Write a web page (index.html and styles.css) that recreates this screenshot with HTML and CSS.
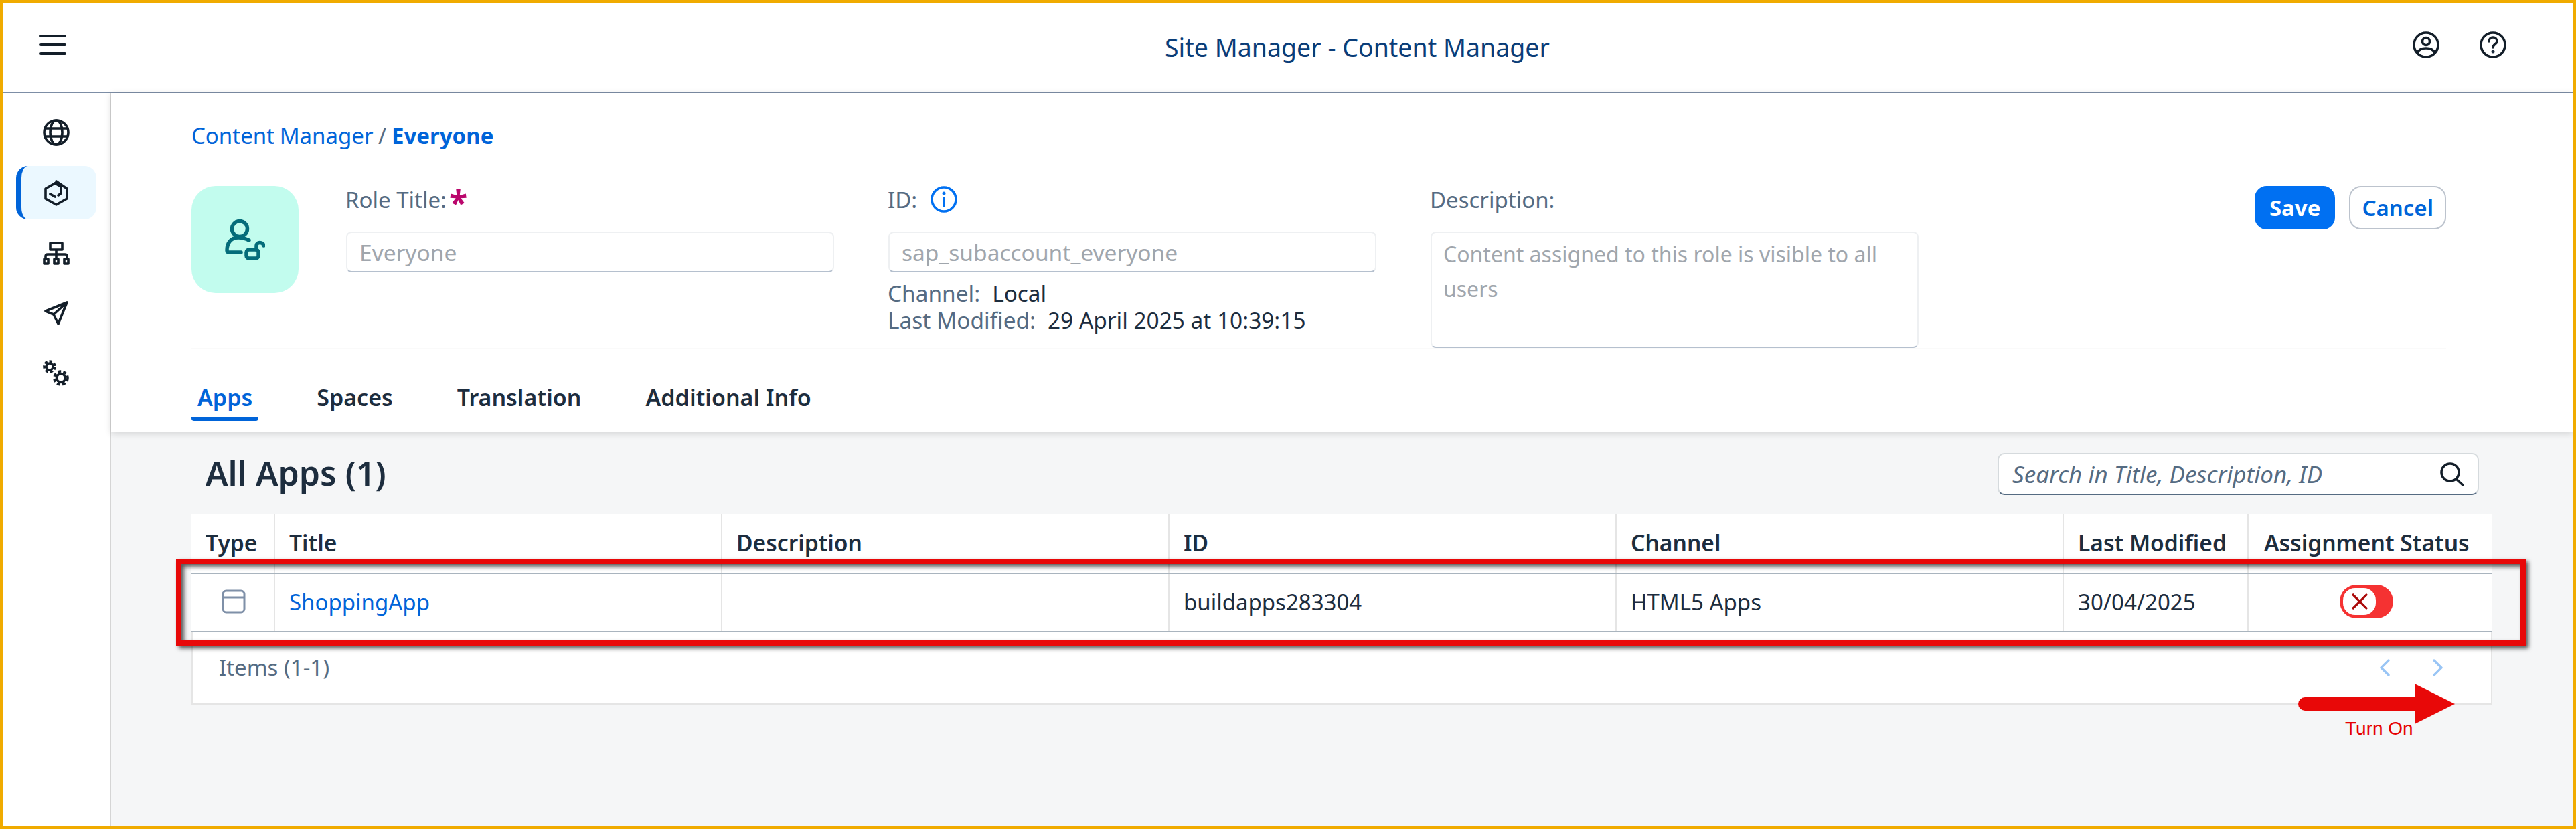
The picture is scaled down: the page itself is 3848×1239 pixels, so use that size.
FILE: index.html
```html
<!DOCTYPE html>
<html lang="en">
<head>
    <meta charset="UTF-8">
    <title>Site Manager - Content Manager</title>
    <link rel="stylesheet" href="styles.css">
</head>
<body>
<div class="frame">
    <header class="topbar">
        <svg class="hamburger" viewBox="0 0 40 32"><path d="M2 3H38M2 16H38M2 29H38"/></svg>
        <div class="app-title">Site Manager - Content Manager</div>
        <div class="top-actions">
            <svg class="icon" viewBox="0 0 40 40"><circle cx="20" cy="20" r="18"/><circle cx="20" cy="15" r="5.5"/><path d="M7 32C9 27 14 25 20 25S31 27 33 32"/></svg>
            <svg class="icon" viewBox="0 0 40 40"><circle cx="20" cy="20" r="18"/><path d="M14 15C14 11 17 9 20 9S26 11 26 15C26 19 20 19 20 24"/><circle class="dot" cx="20" cy="30" r="2.5"/></svg>
        </div>
    </header>

    <div class="layout">
        <nav class="sidebar">
            <a class="nav-item"><svg class="icon" viewBox="0 0 40 40"><circle cx="20" cy="20" r="18"/><ellipse cx="20" cy="20" rx="9" ry="18"/><path d="M3 14H37M3 26H37"/></svg></a>
            <a class="nav-item active"><svg class="icon hex" viewBox="0 0 36 40"><path d="M16 6L2 14V29L18 38L34 29V14L18 3M16 6L25 11V21L21 24M9 22L16 26"/></svg></a>
            <a class="nav-item"><svg class="icon org" viewBox="0 0 40 35"><path d="M11 2H29V12H11ZM20 12V19M4 26V22Q4 19 7 19H33Q36 19 36 22V26M20 19V26M2 26H8V33H2ZM17 26H23V33H17ZM32 26H38V33H32Z"/></svg></a>
            <a class="nav-item"><svg class="icon send" viewBox="0 0 36 36"><path d="M34 2L2 15L14 20L21 34ZM14 20L34 2"/></svg></a>
            <a class="nav-item"><svg class="icon gears" viewBox="0 0 40 40"><circle cx="10" cy="10" r="5"/><circle class="teeth" cx="10" cy="10" r="8" stroke-dasharray="4.4 3"/><circle cx="27" cy="27" r="6.5"/><circle class="teeth" cx="27" cy="27" r="10" stroke-dasharray="5 3.4"/></svg></a>
        </nav>

        <main class="main">
            <section class="panel">
                <div class="breadcrumb"><a>Content Manager</a> <span class="sep">/</span> <a class="current">Everyone</a></div>
                <div class="form-row">
                    <div class="avatar">
                        <svg viewBox="0 0 60 60"><circle cx="22" cy="14" r="11.5"/><path d="M36 31C30 28 26 27 20 27C9 27 3 35 3 46C3 48 4 49 6 49H24"/><rect x="32" y="45" width="18" height="13" rx="4"/><path d="M47 45V39C47 33 57 33 58 39"/></svg>
                    </div>
                    <div class="field">
                        <label class="field-label">Role Title:<span class="required">*</span></label>
                        <input class="field-input" value="Everyone" readonly>
                    </div>
                    <div class="field">
                        <label class="field-label">ID:
                            <svg class="info" viewBox="0 0 40 40"><circle cx="20" cy="20" r="18"/><path d="M20 18V30"/><circle class="dot" cx="20" cy="11" r="2.5"/></svg>
                        </label>
                        <input class="field-input" value="sap_subaccount_everyone" readonly>
                        <div class="meta"><span class="meta-key">Channel:</span>Local</div>
                        <div class="meta"><span class="meta-key">Last Modified:</span>29 April 2025 at 10:39:15</div>
                    </div>
                    <div class="field">
                        <label class="field-label">Description:</label>
                        <textarea class="field-input field-area" readonly>Content assigned to this role is visible to all users</textarea>
                    </div>
                    <div class="form-actions">
                        <button class="btn btn-primary">Save</button>
                        <button class="btn">Cancel</button>
                    </div>
                </div>
                <div class="tabs">
                    <a class="tab active">Apps</a>
                    <a class="tab">Spaces</a>
                    <a class="tab">Translation</a>
                    <a class="tab">Additional Info</a>
                </div>
            </section>

            <section class="content">
                <div class="toolbar">
                    <h2 class="list-title">All Apps (1)</h2>
                    <div class="search">
                        <input class="search-input" placeholder="Search in Title, Description, ID">
                        <svg class="icon search-icon" viewBox="0 0 36 36"><circle cx="15" cy="15" r="13"/><path d="M24 25L34 34"/></svg>
                    </div>
                </div>
                <table class="apps">
                    <colgroup>
                        <col class="col-type"><col class="col-wide"><col class="col-wide"><col class="col-wide"><col class="col-wide"><col class="col-date"><col class="col-status">
                    </colgroup>
                    <thead>
                        <tr><th>Type</th><th>Title</th><th>Description</th><th>ID</th><th>Channel</th><th>Last Modified</th><th>Assignment Status</th></tr>
                    </thead>
                    <tbody>
                        <tr>
                            <td class="cell-type"><svg class="app-icon" viewBox="0 0 36 36"><rect x="2" y="2" width="32" height="32" rx="5"/><path d="M2 12H34"/></svg></td>
                            <td><a class="link">ShoppingApp</a></td>
                            <td></td>
                            <td>buildapps283304</td>
                            <td>HTML5 Apps</td>
                            <td>30/04/2025</td>
                            <td class="cell-status">
                                <span class="toggle"><span class="knob"><svg viewBox="0 0 26 24"><path d="M2 1L24 23M24 1L2 23"/></svg></span></span>
                            </td>
                        </tr>
                    </tbody>
                </table>
                <div class="table-footer">
                    <span class="items">Items (1-1)</span>
                    <div class="pager">
                        <svg viewBox="0 0 16 26"><path d="M14 2L3 13L14 24"/></svg>
                        <svg viewBox="0 0 16 26"><path d="M2 2L13 13L2 24"/></svg>
                    </div>
                </div>
            </section>
        </main>
    </div>

    <!-- annotation drawn over the screenshot -->
    <div class="mark-box"></div>
    <svg class="mark-arrow" viewBox="0 0 234 60"><path d="M10 20H174V0L234 30L174 60V40H10A10 10 0 0 1 10 20Z"/></svg>
    <div class="mark-label">Turn On</div>
</div>
</body>
</html>
```

FILE: styles.css
```css
* {
    box-sizing: border-box;
}
html, body {
    margin: 0;
    padding: 0;
}
body {
    font-family: "Noto Sans", sans-serif;
    font-size: 33px;
    color: #1d2d3e;
}
.frame {
    position: relative;
    width: 3848px;
    height: 1239px;
    border: 4px solid #f0ab00;
    background: #fff;
    overflow: hidden;
    display: flex;
    flex-direction: column;
}

/* top bar */
.topbar {
    height: 135px;
    display: flex;
    align-items: center;
    padding: 0 100px 0 55px;
    border-bottom: 2px solid #7d8ea6;
    flex-shrink: 0;
}
.hamburger {
    width: 40px;
    height: 32px;
    margin-top: -8px;
    fill: none;
    stroke: #131e29;
    stroke-width: 4;
    stroke-linecap: round;
}
.app-title {
    flex: 1;
    text-align: center;
    padding-left: 352px;
    font-size: 37.5px;
    color: #0a3d78;
}
.top-actions {
    display: flex;
    gap: 60px;
    margin-top: -8px;
}
.icon {
    width: 40px;
    height: 40px;
    fill: none;
    stroke: #131e29;
    stroke-width: 3.6;
    stroke-linejoin: round;
    stroke-linecap: round;
    display: block;
}
.dot {
    fill: currentColor;
    stroke: none;
}

.layout {
    flex: 1;
    display: flex;
    min-height: 0;
}

/* side nav */
.sidebar {
    width: 162px;
    flex-shrink: 0;
    border-right: 2px solid #d5d5d5;
    padding: 19px 20px 0 20px;
    display: flex;
    flex-direction: column;
    align-items: center;
    gap: 10px;
}
.nav-item {
    width: 120px;
    height: 80px;
    display: flex;
    align-items: center;
    justify-content: center;
    border-radius: 18px;
}
.nav-item.active {
    background: #ebf8ff;
    border-left: 8px solid #0064d9;
    padding-right: 8px;
}
.hex {
    width: 36px;
}
.org {
    height: 35px;
}
.send {
    width: 36px;
    height: 36px;
}
.teeth {
    stroke-linecap: butt;
}

.main {
    flex: 1;
    min-width: 0;
    display: flex;
    flex-direction: column;
    background: #f5f6f7;
}

/* header panel */
.panel {
    position: relative;
    background: #fff;
    height: 507px;
    padding: 44px 190px 0 120px;
    box-shadow: 0 2px 10px rgba(0, 0, 0, 0.14);
    flex-shrink: 0;
}
.breadcrumb {
    height: 40px;
    line-height: 40px;
    margin-bottom: 55px;
    color: #556b82;
    word-spacing: -1px;
}
.breadcrumb a {
    color: #0064d9;
}
.breadcrumb .current {
    font-weight: 700;
}
.form-row {
    display: flex;
    height: 242px;
}
.avatar {
    width: 160px;
    height: 160px;
    border-radius: 36px;
    background: #c2fcee;
    margin-right: 71px;
    display: flex;
    align-items: center;
    justify-content: center;
    flex-shrink: 0;
}
.avatar svg {
    width: 60px;
    height: 60px;
    fill: none;
    stroke: #046c7a;
    stroke-width: 5.5;
    stroke-linecap: round;
    stroke-linejoin: round;
}
.field {
    width: 729px;
    margin-right: 81px;
    flex-shrink: 0;
}
.field-label {
    display: flex;
    align-items: center;
    gap: 20px;
    height: 40px;
    margin-bottom: 28px;
    margin-left: -1px;
    color: #556b82;
}
.required {
    color: #ba066c;
    font-weight: 700;
    font-size: 50px;
    line-height: 40px;
    margin-left: -16px;
    padding-top: 8px;
}
.info {
    width: 40px;
    height: 40px;
    fill: none;
    stroke: #0070f2;
    stroke-width: 3.6;
    stroke-linecap: round;
    color: #0070f2;
}
.field-input {
    display: block;
    width: 100%;
    height: 61px;
    padding: 0 18px;
    font-family: "Noto Sans", sans-serif;
    font-size: 33.5px;
    color: #a0a6ad;
    background: #fff;
    border: 2px solid #eef0f2;
    border-bottom-color: #b5c0ce;
    border-radius: 8px;
    outline: none;
}
.field-area {
    height: 174px;
    font-size: 32px;
    line-height: 52px;
    padding: 6px 30px 0 17px;
    resize: none;
    overflow: hidden;
}
.meta {
    height: 40px;
    line-height: 40px;
    font-size: 33.4px;
    margin-left: -1px;
}
.field-input + .meta {
    margin-top: 11px;
}
.meta-key {
    color: #556b82;
    margin-right: 18px;
}
.form-actions {
    margin-left: auto;
    display: flex;
    gap: 21px;
    align-items: flex-start;
}
.btn {
    height: 65px;
    padding: 0 17px;
    font-family: "Noto Sans", sans-serif;
    font-size: 33px;
    font-weight: 600;
    color: #0064d9;
    background: #fff;
    border: 2px solid #bcc3cd;
    border-radius: 18px;
}
.btn-primary {
    padding: 0 20px;
    color: #fff;
    background: #0070f2;
    border-color: #0070f2;
    font-weight: 700;
}

/* tabs */
.tabs {
    display: flex;
    height: 109px;
    padding-top: 43px;
    border-top: 1px solid #fafafa;
    gap: 78px;
}
.tab {
    display: flex;
    align-items: center;
    padding: 0 9px;
    font-size: 34px;
    font-weight: 600;
    border-bottom: 6px solid transparent;
}
.tab.active {
    color: #0064d9;
    border-bottom-color: #0064d9;
    border-radius: 0 0 4px 4px;
}

/* list */
.content {
    flex: 1;
    padding: 31px 121px 0 120px;
}
.toolbar {
    display: flex;
    align-items: center;
    justify-content: space-between;
    height: 63px;
    margin-bottom: 28px;
}
.list-title {
    margin: 0 0 4px 0;
    padding-left: 21px;
    font-size: 50px;
    font-weight: 600;
}
.search {
    width: 719px;
    height: 63px;
    margin-right: 20px;
    display: flex;
    align-items: center;
    padding: 0 20px 0 20px;
    background: #fff;
    border: 2px solid #d5dadd;
    border-bottom-color: #556b82;
    border-radius: 10px;
}
.search-input {
    flex: 1;
    min-width: 0;
    border: none;
    outline: none;
    background: none;
    font-family: "Noto Sans", sans-serif;
    font-size: 35px;
    font-style: italic;
    color: #556b82;
    padding: 0;
}
.search-input::placeholder {
    color: #556b82;
    opacity: 1;
}
.search-icon {
    width: 36px;
    height: 36px;
}
.apps {
    width: 100%;
    table-layout: fixed;
    border-collapse: collapse;
    background: #fff;
}
.col-type {
    width: 124px;
}
.col-wide {
    width: 668px;
}
.col-date {
    width: 276px;
}
.col-status {
    width: 365px;
}
.apps th, .apps td {
    padding: 0 21px 3px 21px;
    text-align: left;
    border-right: 2px solid #e5e5e5;
    font-size: 33px;
}
.apps th:last-child, .apps td:last-child {
    border-right: none;
    padding: 0 0 3px 23px;
}
.apps th {
    height: 89px;
    font-size: 33.6px;
    font-weight: 600;
    border-bottom: 2px solid #a9b4be;
}
.apps td {
    height: 87px;
    border-bottom: 2px solid #a9b4be;
}
.cell-type {
    text-align: center;
}
.app-icon {
    display: block;
    width: 36px;
    height: 36px;
    margin-left: 24px;
    fill: none;
    stroke: #7f90a8;
    stroke-width: 3;
}
.link {
    color: #0064d9;
}
.toggle {
    display: block;
    width: 80px;
    height: 50px;
    margin-left: 113px;
    padding: 5px;
    background: #f53232;
    border-radius: 25px;
}
.knob {
    display: flex;
    align-items: center;
    justify-content: center;
    width: 49px;
    height: 40px;
    background: #fff;
    border-radius: 18px;
}
.knob svg {
    width: 26px;
    height: 24px;
    fill: none;
    stroke: #aa0808;
    stroke-width: 3.2;
}
.table-footer {
    height: 108px;
    display: flex;
    align-items: flex-start;
    justify-content: space-between;
    padding: 33px 71px 0 39px;
    background: #fff;
    border: 2px solid #e5e5e5;
    border-top: none;
}
.items {
    color: #556b82;
    line-height: 40px;
}
.pager {
    display: flex;
    gap: 64px;
    padding-top: 7px;
}
.pager svg {
    width: 16px;
    height: 26px;
    fill: none;
    stroke: #99c5f5;
    stroke-width: 3.4;
    stroke-linecap: round;
    stroke-linejoin: round;
}

/* annotation */
.mark-box {
    position: absolute;
    left: 259px;
    top: 831px;
    width: 3510px;
    height: 130px;
    border: 8px solid #e80808;
    box-shadow: 4px 4px 6px rgba(0, 0, 0, 0.65), inset 4px 4px 6px rgba(0, 0, 0, 0.65);
}
.mark-arrow {
    position: absolute;
    left: 3429px;
    top: 1018px;
    width: 234px;
    height: 60px;
    fill: #e80808;
}
.mark-label {
    position: absolute;
    left: 3499px;
    top: 1069px;
    font-family: "Liberation Sans", sans-serif;
    font-size: 28px;
    color: #e60000;
}
```
